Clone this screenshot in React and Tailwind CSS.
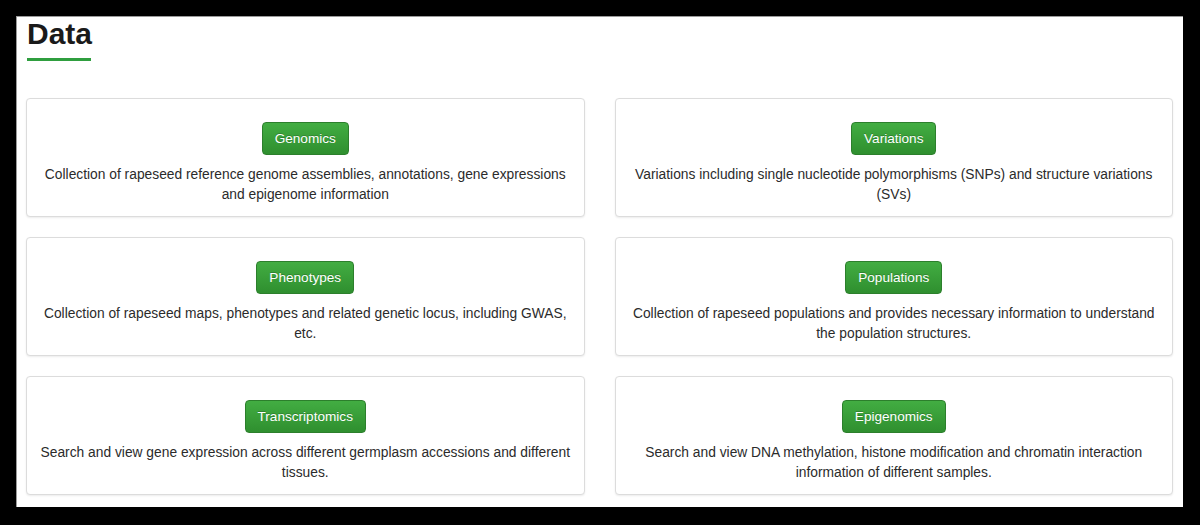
import React from "react";

const cards = [
  {
    title: "Genomics",
    text: "Collection of rapeseed reference genome assemblies, annotations, gene expressions and epigenome information",
  },
  {
    title: "Variations",
    text: "Variations including single nucleotide polymorphisms (SNPs) and structure variations (SVs)",
  },
  {
    title: "Phenotypes",
    text: "Collection of rapeseed maps, phenotypes and related genetic locus, including GWAS, etc.",
  },
  {
    title: "Populations",
    text: "Collection of rapeseed populations and provides necessary information to understand the population structures.",
  },
  {
    title: "Transcriptomics",
    text: "Search and view gene expression across different germplasm accessions and different tissues.",
  },
  {
    title: "Epigenomics",
    text: "Search and view DNA methylation, histone modification and chromatin interaction information of different samples.",
  },
];

export default function App() {
  return (
    <div
      className="w-[1200px] h-[525px] bg-black pt-[16px] pl-[16px] pr-[17px] pb-[18px]"
      style={{ fontFamily: '"Liberation Sans", Arial, sans-serif' }}
    >
      <div className="h-full bg-white pl-[9px] pr-[10px] border border-[#9a9a9a] border-r-0 border-b-0">
        <h1 className="text-[30px] leading-[33px] font-bold text-[#1a1a1a] m-0 pl-[1px]">Data</h1>
        <div className="w-[64px] h-[3px] bg-[#2f9e3f] mt-[8px] ml-[1px]"></div>
        <div className="grid grid-cols-2 gap-x-[30px] gap-y-[20px] mt-[37px]">
          {cards.map((c) => (
            <div
              key={c.title}
              className="h-[119px] border border-[#dcdcdc] rounded-[4px] bg-white shadow-[0_1px_2px_rgba(0,0,0,0.08)] pt-[23px] px-[11px] flex flex-col items-center"
            >
              <span className="inline-block text-[13.6px] leading-[19px] py-[6px] px-[12px] text-white rounded-[4px] border border-[#2c7f2c] bg-gradient-to-b from-[#42ad42] to-[#2f8f2f] [text-shadow:0_-1px_0_rgba(0,0,0,0.2)]">
                {c.title}
              </span>
              <p className="mt-[10px] text-[13.8px] leading-[20px] text-[#2b2b2b] text-center">{c.text}</p>
            </div>
          ))}
        </div>
      </div>
    </div>
  );
}
